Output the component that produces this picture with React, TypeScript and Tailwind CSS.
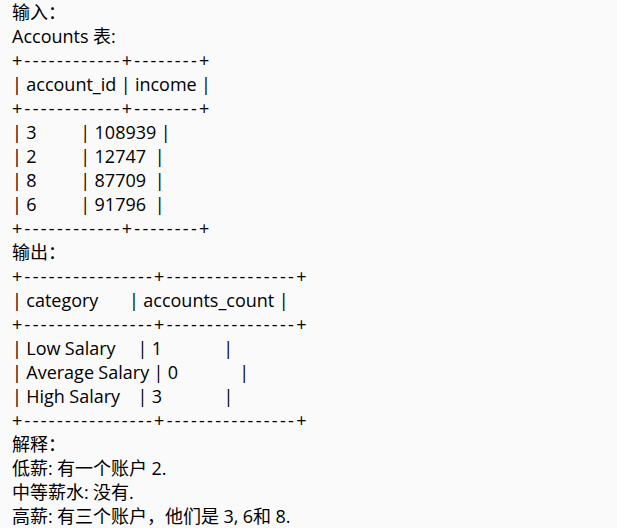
const lines: { text: string; rule?: boolean }[] = [
  { text: "输入：" },
  { text: "Accounts 表:" },
  { text: "+------------+--------+", rule: true },
  { text: "| account_id | income |" },
  { text: "+------------+--------+", rule: true },
  { text: "| 3          | 108939 |" },
  { text: "| 2          | 12747  |" },
  { text: "| 8          | 87709  |" },
  { text: "| 6          | 91796  |" },
  { text: "+------------+--------+", rule: true },
  { text: "输出：" },
  { text: "+----------------+----------------+", rule: true },
  { text: "| category       | accounts_count |" },
  { text: "+----------------+----------------+", rule: true },
  { text: "| Low Salary     | 1              |" },
  { text: "| Average Salary | 0              |" },
  { text: "| High Salary    | 3              |" },
  { text: "+----------------+----------------+", rule: true },
  { text: "解释：" },
  { text: "低薪: 有一个账户 2." },
  { text: "中等薪水: 没有." },
  { text: "高薪: 有三个账户，他们是 3, 6和 8." },
];

export default function App() {
  return (
    <div className="w-[617px] h-[528px] overflow-hidden bg-[#fafafa] pl-3 text-[18px] leading-6 text-black font-['Open_Sans','Noto_Sans_CJK_SC',sans-serif] [word-spacing:-0.3px]">
      {lines.map((line, i) => (
        <div key={i} className={line.rule ? "whitespace-pre tracking-[2.3px]" : "whitespace-pre"}>
          {line.text}
        </div>
      ))}
    </div>
  );
}
